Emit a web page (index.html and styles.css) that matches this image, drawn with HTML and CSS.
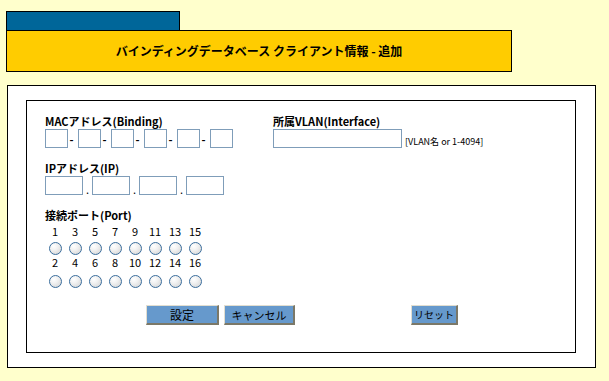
FILE: index.html
```html
<!DOCTYPE html>
<html>
<head lang="ja">
    <meta charset="UTF-8">
    <title>バインディングデータベース クライアント情報 - 追加</title>
    <link rel="stylesheet" href="styles.css">
</head>
<body>
<div class="head">
    <div class="tab"></div>
    <div class="title">バインディングデータベース クライアント情報 - 追加</div>
</div>

<div class="outer">
    <div class="inner">
        <div class="row">
            <div class="col-left">
                <div class="label">MACアドレス(Binding)</div>
                <div class="mac">
                    <input type="text" class="box-s"><span class="sep">-</span>
                    <input type="text" class="box-s"><span class="sep">-</span>
                    <input type="text" class="box-s"><span class="sep">-</span>
                    <input type="text" class="box-s"><span class="sep">-</span>
                    <input type="text" class="box-s"><span class="sep">-</span>
                    <input type="text" class="box-s">
                </div>
            </div>
            <div class="col-right">
                <div class="label">所属VLAN(Interface)</div>
                <div class="vlan">
                    <input type="text" class="box-l"><span class="hint">[VLAN名 or 1-4094]</span>
                </div>
            </div>
        </div>

        <div class="label label-ip">IPアドレス(IP)</div>
        <div class="ip">
            <input type="text" class="box-m"><span class="dot">.</span>
            <input type="text" class="box-m"><span class="dot">.</span>
            <input type="text" class="box-m"><span class="dot">.</span>
            <input type="text" class="box-m">
        </div>

        <div class="label label-port">接続ポート(Port)</div>
        <div class="ports">
            <div class="nums nums-1"><span>1</span><span>3</span><span>5</span><span>7</span><span>9</span><span>11</span><span>13</span><span>15</span></div>
            <div class="radios radios-1">
                <span><input type="checkbox"></span><span><input type="checkbox"></span><span><input type="checkbox"></span><span><input type="checkbox"></span>
                <span><input type="checkbox"></span><span><input type="checkbox"></span><span><input type="checkbox"></span><span><input type="checkbox"></span>
            </div>
            <div class="nums nums-2"><span>2</span><span>4</span><span>6</span><span>8</span><span>10</span><span>12</span><span>14</span><span>16</span></div>
            <div class="radios radios-2">
                <span><input type="checkbox"></span><span><input type="checkbox"></span><span><input type="checkbox"></span><span><input type="checkbox"></span>
                <span><input type="checkbox"></span><span><input type="checkbox"></span><span><input type="checkbox"></span><span><input type="checkbox"></span>
            </div>
        </div>

        <div class="buttons">
            <button class="btn btn-set">設定</button>
            <button class="btn btn-cancel">キャンセル</button>
            <button class="btn btn-reset">リセット</button>
        </div>
    </div>
</div>
</body>
</html>
```

FILE: styles.css
```css
body {
    margin: 0;
    padding: 11px 0 0 6px;
    background: #ffffcc;
    font-family: "Noto Sans CJK JP", "Liberation Sans", sans-serif;
    color: #000;
}

.tab {
    width: 174px;
    height: 19px;
    box-sizing: border-box;
    background: #006699;
    border: 1px solid #000;
    border-bottom: none;
}

.title {
    width: 506px;
    height: 42px;
    box-sizing: border-box;
    background: #ffcc00;
    border: 1px solid #000;
    text-align: center;
    line-height: 39px;
    font-size: 12px;
    font-weight: bold;
}

.outer {
    width: 589px;
    margin: 13px 0 0 1px;
    box-sizing: border-box;
    background: #fff;
    border: 1px solid #000;
    padding: 14px 19px 14px 18px;
}

.inner {
    border: 1px solid #000;
    padding: 13px 18px 27px;
}

.row {
    display: flex;
}

.col-left {
    width: 228px;
}

.label {
    font-size: 11px;
    font-weight: bold;
    line-height: 14px;
    height: 14px;
}

.label-ip {
    margin-top: 13px;
}

.label-port {
    margin-top: 13px;
}

input[type="text"] {
    margin: 0;
    padding: 0;
    height: 19px;
    box-sizing: border-box;
    border: 1px solid #7f9db9;
    background: #fff;
}

.mac, .vlan {
    display: flex;
    align-items: center;
    margin-top: 1px;
}

.vlan {
    align-items: flex-end;
}

.box-s {
    width: 23px;
}

.box-m {
    width: 38px;
}

.box-l {
    width: 129px;
}

.sep {
    width: 10px;
    padding-right: 3px;
    box-sizing: border-box;
    text-align: center;
    font-size: 11px;
    font-weight: bold;
    line-height: 12px;
}

.hint {
    margin-left: 3px;
    font-size: 9px;
    line-height: 12px;
    white-space: nowrap;
}

.ip {
    display: flex;
    align-items: flex-end;
    margin-top: 1px;
}

.dot {
    width: 9px;
    text-align: center;
    font-size: 11px;
    line-height: 11px;
}

.nums, .radios {
    display: flex;
}

.nums span, .radios span {
    width: 20px;
    text-align: center;
}

.nums {
    font-size: 11px;
    line-height: 12px;
    height: 12px;
}

.nums-1 {
    margin-top: 3px;
}

.nums-2 {
    margin-top: 1px;
}

.radios {
    height: 13px;
}

.radios-1 {
    margin-top: 5px;
}

.radios-2 {
    margin-top: 7px;
}

.radios input {
    -webkit-appearance: none;
    appearance: none;
    display: block;
    margin: 0 auto;
    width: 13px;
    height: 13px;
    box-sizing: border-box;
    border: 1px solid #3a6d9c;
    border-radius: 50%;
    background: radial-gradient(circle at 35% 30%, #ffffff 0%, #f0f0f0 40%, #d0d0d0 100%);
}

.buttons {
    display: flex;
    margin: 17px 0 0 101px;
}

.btn {
    margin: 0;
    padding: 0;
    height: 20px;
    box-sizing: border-box;
    background: #6699cc;
    border-style: solid;
    border-width: 1px 2px 2px 1px;
    border-color: #e2ded0 #7b7868 #7b7868 #e2ded0;
    font-family: "Noto Sans CJK JP", "Liberation Sans", sans-serif;
    font-size: 12px;
    line-height: 16px;
    color: #000;
    white-space: nowrap;
    overflow: hidden;
}

.btn-set {
    width: 73px;
}

.btn-cancel {
    width: 71px;
    margin-left: 5px;
    font-size: 11px;
}

.btn-reset {
    width: 47px;
    margin-left: 116px;
    font-size: 10px;
}
```
